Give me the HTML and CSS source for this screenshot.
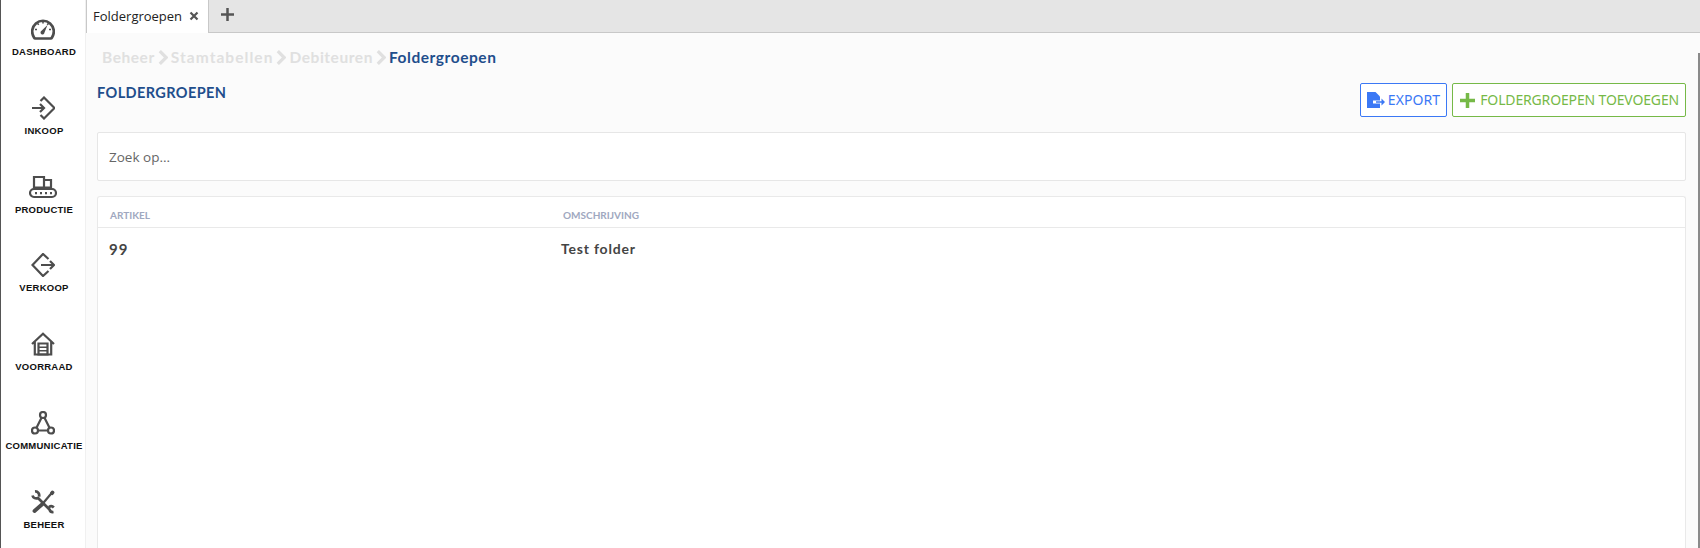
FILE: index.html
```html
<!DOCTYPE html>
<html lang="nl">
<head>
<meta charset="utf-8">
<title>Foldergroepen</title>
<link rel="stylesheet" href="styles.css">
</head>
<body>
<div class="app">
  <nav class="sidebar">
    <a class="nav-item">
      <svg class="nav-icon" viewBox="0 0 24 24"><path class="s2" d="M4.500 21.500A2 2 0 0 1 3 20.500 10.800 10.800 0 1 1 21 20.500 2 2 0 0 1 19.500 21.500Z"/><path class="s1" d="M12 4.500v2M6.500 6.500l1.300 1.300M17.500 6.500l-1.300 1.300M4 12.500h2M18 12.500h2"/><path class="f" d="M16.500 8l-3 7.500a2 2 0 1 1-3-1.800Z"/></svg>
      <span>DASHBOARD</span>
    </a>
    <a class="nav-item">
      <svg class="nav-icon" viewBox="0 0 24 24"><path class="s" d="M1 12h12M9 8l4 4-4 4M9.500 5L13 1.500 23.500 12 13 22.500 9.500 19"/></svg>
      <span>INKOOP</span>
    </a>
    <a class="nav-item">
      <svg class="nav-icon wide" viewBox="0 0 28 24"><path class="s" d="M5 12.500V2h10v10.500zM15 5h7v7.500h-7"/><rect class="s" x="1" y="14" width="26" height="8" rx="4"/><path class="f" d="M6 17h2v2.200H6zM11 17h2v2.200h-2zM16 17h2v2.200h-2zM21 17h2v2.200h-2z"/></svg>
      <span>PRODUCTIE</span>
    </a>
    <a class="nav-item">
      <svg class="nav-icon" viewBox="0 0 24 24"><path class="s" d="M10 12h13M19 8l4 4-4 4M17.500 6L12 1 1.500 12 12 23l5.500-5"/></svg>
      <span>VERKOOP</span>
    </a>
    <a class="nav-item">
      <svg class="nav-icon" viewBox="0 0 24 24"><path class="s" d="M1 12L12 1.800 23 12M3.800 10v12.500h16.400V10"/><path class="s" d="M7.500 11.500h9v11h-9z"/><path class="s1" d="M7.500 15.200h9M7.500 18.800h9"/></svg>
      <span>VOORRAAD</span>
    </a>
    <a class="nav-item">
      <svg class="nav-icon" viewBox="0 0 24 24"><circle class="s" cx="12" cy="4" r="3"/><circle class="s" cx="4" cy="19.500" r="3"/><circle class="s" cx="20" cy="19.500" r="3"/><path class="s" d="M10.500 6.800L5.500 16.800M13.500 6.800l5 10M7 19.500h10"/></svg>
      <span>COMMUNICATIE</span>
    </a>
    <a class="nav-item">
      <svg class="nav-icon" viewBox="0 0 24 24"><path class="s" d="M21.500 2L11 14.500"/><path class="s3" d="M21.500 2.500l-.5.700M11.500 14L3.500 21"/><path class="s2" d="M1.500 5.500A3.800 3.800 0 0 0 7 8L18.500 19.500A3.600 3.600 0 0 0 22.500 22M8 6.500A3.800 3.800 0 0 0 4 1.500M22.800 17.500A3.600 3.600 0 0 0 18 17"/></svg>
      <span>BEHEER</span>
    </a>
  </nav>
  <div class="main">
    <header class="tabbar">
      <div class="tab">
        <span>Foldergroepen</span>
        <svg class="tab-close" viewBox="0 0 10 10"><path d="M1.500 1.500l7 7M8.500 1.500l-7 7"/></svg>
      </div>
      <svg class="tab-add" viewBox="0 0 13 13"><path d="M6.500 0v13M0 6.500h13"/></svg>
    </header>
    <div class="content">
      <div class="breadcrumb">
        <span>Beheer</span><svg class="chev" viewBox="0 0 9 14"><path d="M1.500 1l6 6-6 6"/></svg>
        <span class="loose">Stamtabellen</span><svg class="chev" viewBox="0 0 9 14"><path d="M1.500 1l6 6-6 6"/></svg>
        <span>Debiteuren</span><svg class="chev" viewBox="0 0 9 14"><path d="M1.500 1l6 6-6 6"/></svg>
        <span class="current">Foldergroepen</span>
      </div>
      <div class="page-head">
        <h1>FOLDERGROEPEN</h1>
        <div class="actions">
          <button class="btn btn-blue">
            <svg class="btn-icon" viewBox="0 0 18 16"><path d="M0 0H8.500L13 4.500V16H0Z"/><path class="cut" d="M6 8.500h7v3H6z"/><path d="M9 9.200h5.500V6.500L18 10l-3.500 3.500v-2.700H9z"/></svg>
            EXPORT
          </button>
          <button class="btn btn-green">
            <svg class="btn-icon plus" viewBox="0 0 15 15"><path d="M7.500 0v15M0 7.500h15"/></svg>
            FOLDERGROEPEN TOEVOEGEN
          </button>
        </div>
      </div>
      <div class="search">Zoek op...</div>
      <section class="card">
        <div class="row head">
          <div class="col-a">ARTIKEL</div>
          <div>OMSCHRIJVING</div>
        </div>
        <div class="row body">
          <div class="col-b num">99</div>
          <div>Test folder</div>
        </div>
      </section>
    </div>
  </div>
  <div class="scrollbar"></div>
</div>
</body>
</html>
```
FILE: styles.css
```css
* { box-sizing: border-box; }
html, body { margin: 0; height: 100%; overflow: hidden; background: #fff; }
.app { position: relative; display: flex; height: 548px; border-left: 1px solid #555; font-family: "Open Sans", sans-serif; }
.sidebar { width: 85px; flex: none; background: #fff; display: flex; flex-direction: column; padding-top: 17px; border-right: 1px solid #f0f0f0; }
.nav-item { height: 78.8px; flex: none; display: flex; flex-direction: column; align-items: center; color: #111; }
.nav-item span { font: bold 9.500px/11px "Liberation Sans", sans-serif; letter-spacing: .25px; margin: 5px 0 0 2px; white-space: nowrap; }
.nav-icon { width: 24px; height: 24px; display: block; flex: none; }
.nav-icon.wide { width: 28px; }
.s { fill: none; stroke: #4d4d4d; stroke-width: 2.200; }
.s1 { fill: none; stroke: #4d4d4d; stroke-width: 1.600; }
.s2 { fill: none; stroke: #4d4d4d; stroke-width: 2.700; }
.s3 { fill: none; stroke: #4d4d4d; stroke-width: 3.800; stroke-linecap: round; }
.f { fill: #4d4d4d; }
.main { flex: 1; min-width: 0; display: flex; flex-direction: column; }
.tabbar { height: 33px; flex: none; background: #e5e5e5; border-bottom: 1px solid #c8c8c8; display: flex; align-items: flex-start; }
.tab { height: 33px; width: 123px; background: #fff; border-left: 1px solid #c8c8c8; border-right: 1px solid #c8c8c8; display: flex; align-items: center; padding: 0 6px 2px 6px; font-size: 13px; color: #222; gap: 7px; white-space: nowrap; }
.tab-close { width: 10px; height: 10px; stroke: #555; stroke-width: 2.200; fill: none; }
.tab-add { width: 13px; height: 13px; margin: 8px 0 0 12px; stroke: #555; stroke-width: 2.500; fill: none; }
.content { flex: 1; background: #fbfbfb; padding: 14px 14px 0 11px; display: flex; flex-direction: column; min-height: 0; }
.breadcrumb { display: flex; align-items: center; height: 20px; padding-left: 5px; font: bold 15.500px/20px "Lato", sans-serif; color: #e0e0e0; letter-spacing: .55px; }
.loose { letter-spacing: 1.050px; }
.chev { width: 10px; height: 15px; margin: 0 3px; fill: none; stroke: #e0e0e0; stroke-width: 3; }
.current { color: #1f4e8c; margin-left: 0; }
.page-head { display: flex; justify-content: space-between; align-items: flex-start; margin-top: 14px; }
h1 { margin: 3px 0 0; font: bold 14.500px/18px "Lato", sans-serif; color: #1f4e8c; letter-spacing: .4px; }
.actions { display: flex; gap: 5px; margin-top: 2px; }
.btn { height: 34px; background: #fff; border-radius: 2px; border: 1px solid; padding: 0 6px; display: flex; align-items: center; gap: 4px; font: 14px/1 "Noto Sans", sans-serif; letter-spacing: -.15px; white-space: nowrap; }
.btn-blue { color: #3b78f5; border-color: #3b78f5; gap: 3px; letter-spacing: .1px; }
.btn-green { color: #76b947; border-color: #76b947; }
.btn-icon { width: 18px; height: 16px; fill: #3b78f5; }
.cut { fill: #fff; }
.plus { width: 15px; height: 15px; margin: 0 1px 0 1px; fill: none; stroke: #76b947; stroke-width: 3.500; }
.search { height: 49px; margin-top: 15px; background: #fff; border: 1px solid #e6e6e6; border-radius: 2px; display: flex; align-items: center; padding-left: 11px; font-size: 13.500px; color: #666; }
.card { flex: 1; margin-top: 15px; background: #fff; border: 1px solid #e9e9e9; border-bottom: 0; border-radius: 3px 3px 0 0; }
.row { display: flex; }
.col-a { width: 453px; flex: none; }
.col-b { width: 452px; flex: none; }
.head { height: 31px; align-items: center; padding: 6px 0 0 12px; font: bold 10px/12px "Lato", sans-serif; color: #a0a8c0; border-bottom: 1px solid #e9e9e9; }
.body { padding: 11px 0 0 11px; font: bold 14px/20px "Lato", sans-serif; color: #444; letter-spacing: .8px; }
.num { font-size: 15px; letter-spacing: 1px; }
.scrollbar { position: absolute; right: 0; top: 53px; bottom: 0; width: 2px; background: #8a8a8a; }
```
